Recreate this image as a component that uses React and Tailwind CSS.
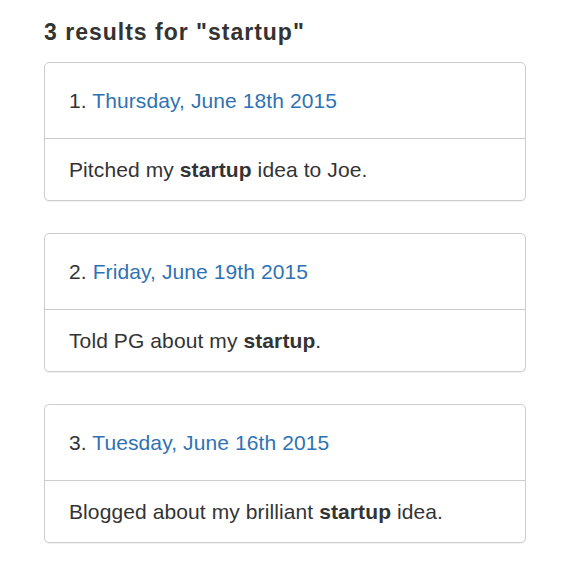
const results = [
  { date: "Thursday, June 18th 2015", before: "Pitched my ", after: " idea to Joe." },
  { date: "Friday, June 19th 2015", before: "Told PG about my ", after: "." },
  { date: "Tuesday, June 16th 2015", before: "Blogged about my brilliant ", after: " idea." },
];

function ResultPanel({ index, result, query }) {
  return (
    <div className="mb-[32px] rounded-[5px] border border-[#cdcdcd] bg-white shadow-[0_1px_1px_rgba(0,0,0,0.06)]">
      <div className="border-b border-[#cdcdcd] px-[24px] pt-[23px] pb-[22px] text-[21px] leading-[30px] tracking-[0.1px]">
        {index}.{" "}
        <a href="#" className="text-[#2f72b3]">
          {result.date}
        </a>
      </div>
      <div className="px-[24px] pt-[16px] pb-[15px] text-[21px] leading-[30px] tracking-[0.1px]">
        {result.before}
        <strong className="font-bold">{query}</strong>
        {result.after}
      </div>
    </div>
  );
}

export default function App() {
  const query = "startup";

  return (
    <div className="min-h-screen bg-white font-['Liberation_Sans',Arial,sans-serif] text-[#333]">
      <div className="w-[570px] px-[44px] pt-[19px]">
        <h3 className="mb-[17px] text-[23px] font-bold leading-[26px] tracking-[1px]">
          {results.length} results for "{query}"
        </h3>
        {results.map((result, i) => (
          <ResultPanel key={result.date} index={i + 1} result={result} query={query} />
        ))}
      </div>
    </div>
  );
}
